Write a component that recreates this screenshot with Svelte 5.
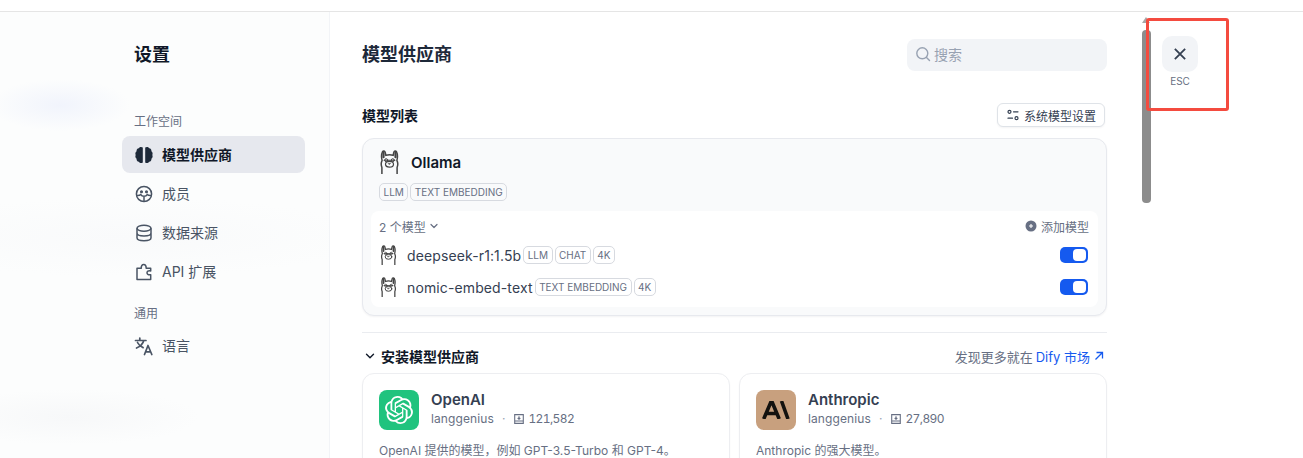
<script>
  const openai = "M22.2819 9.8211a5.9847 5.9847 0 0 0-.5157-4.9108 6.0462 6.0462 0 0 0-6.5098-2.9A6.0651 6.0651 0 0 0 4.9807 4.1818a5.9847 5.9847 0 0 0-3.9977 2.9 6.0462 6.0462 0 0 0 .7427 7.0966 5.98 5.98 0 0 0 .511 4.9107 6.051 6.051 0 0 0 6.5146 2.9001A5.9847 5.9847 0 0 0 13.2599 24a6.0557 6.0557 0 0 0 5.7718-4.2058 5.9894 5.9894 0 0 0 3.9977-2.9001 6.0557 6.0557 0 0 0-.7475-7.0729zm-9.022 12.6081a4.4755 4.4755 0 0 1-2.8764-1.0408l.1419-.0804 4.7783-2.7582a.7948.7948 0 0 0 .3927-.6813v-6.7369l2.02 1.1686a.071.071 0 0 1 .038.052v5.5826a4.504 4.504 0 0 1-4.4945 4.4944zm-9.6607-4.1254a4.4708 4.4708 0 0 1-.5346-3.0137l.142.0852 4.783 2.7582a.7712.7712 0 0 0 .7806 0l5.8428-3.3685v2.3324a.0804.0804 0 0 1-.0332.0615L9.74 19.9502a4.4992 4.4992 0 0 1-6.1408-1.6464zM2.3408 7.8956a4.485 4.485 0 0 1 2.3655-1.9728V11.6a.7664.7664 0 0 0 .3879.6765l5.8144 3.3543-2.0201 1.1685a.0757.0757 0 0 1-.071 0l-4.8303-2.7865A4.504 4.504 0 0 1 2.3408 7.872zm16.5963 3.8558L13.1038 8.364 15.1192 7.2a.0757.0757 0 0 1 .071 0l4.8303 2.7913a4.4944 4.4944 0 0 1-.6765 8.1042v-5.6772a.79.79 0 0 0-.407-.667zm2.0107-3.0231l-.142-.0852-4.7735-2.7818a.7759.7759 0 0 0-.7854 0L9.409 9.2297V6.8974a.0662.0662 0 0 1 .0284-.0615l4.8303-2.7866a4.4992 4.4992 0 0 1 6.6802 4.66zM8.3065 12.863l-2.02-1.1638a.0804.0804 0 0 1-.038-.0567V6.0742a4.4992 4.4992 0 0 1 7.3757-3.4537l-.142.0805L8.704 5.459a.7948.7948 0 0 0-.3927.6813zm1.0976-2.3654l2.602-1.4998 2.6069 1.4998v2.9994l-2.5974 1.4997-2.6067-1.4997Z";
  const models = [
    { name: 'deepseek-r1:1.5b', tags: ['LLM', 'CHAT', '4K'] },
    { name: 'nomic-embed-text', tags: ['TEXT EMBEDDING', '4K'] }
  ];
</script>

{#snippet llama(w, h)}
  <svg class="llama" width={w} height={h} viewBox="0 0 20 24" fill="none" stroke="#444" stroke-width="1.5" stroke-linecap="round" stroke-linejoin="round">
    <path d="M2.4 24v-6.5C1.4 15 1.5 12.6 2.6 10.4 2 8 2 3.800 2.900 2 3.800.6 5.400.8 5.800 2.600L6.300 5.400C8.500 4.500 11.500 4.500 13.700 5.400L14.200 2.600C14.600.8 16.200.6 17.100 2 18 3.800 18 8 17.400 10.400 18.500 12.600 18.600 15 17.600 17.500V24" />
    <path d="M4 2.200v5M16 2.200v5" stroke-width="2.200" />
    <path d="M4.600 10.300h10.800" stroke-width="1.100" />
    <ellipse cx="10" cy="14.200" rx="4" ry="2.900" stroke-width="1.200" />
    <circle cx="6.700" cy="10.200" r="1.500" stroke-width="1" />
    <circle cx="13.300" cy="10.200" r="1.500" stroke-width="1" />
    <path d="M9 13.400h2l-1 1z" fill="#444" stroke-width=".6" />
  </svg>
{/snippet}

{#snippet dl()}
  <svg width="12" height="12" viewBox="0 0 12 12" fill="none" stroke="#676f83" stroke-width="1.100"><path d="M1.700 1.600h8.600v8.800H1.700zM1.700 8h8.600M6 3.200v3M4.700 5 6 6.300 7.300 5" /></svg>
{/snippet}

<div class="page">
  <div class="topbar"></div>
  <div class="body">
    <aside class="sidebar">
      <h1 class="side-title">设置</h1>
      <div class="side-label">工作空间</div>
      <nav class="nav">
        <div class="nav-item active">
          <svg width="20" height="20" viewBox="0 0 20 20" fill="#1d2939"><path d="M8.800 2.600v14.800c-1.200 1.100-3.200.8-4-.7-1.500-.2-2.500-1.500-2.200-3C1.400 12.900 1 11.200 1.700 10 1 8.800 1.400 7.100 2.600 6.300 2.300 4.800 3.300 3.500 4.800 3.300c.8-1.500 2.800-1.800 4-.7zM11.200 2.600v14.800c1.200 1.100 3.200.8 4-.7 1.500-.2 2.500-1.500 2.200-3 1.200-.8 1.600-2.500.9-3.700.7-1.200.3-2.900-.9-3.700.3-1.500-.7-2.800-2.200-3-.8-1.500-2.800-1.800-4-.7z"/></svg>
          <span>模型供应商</span>
        </div>
        <div class="nav-item">
          <svg width="20" height="20" viewBox="0 0 20 20" fill="none" stroke="#495464" stroke-width="1.500" stroke-linecap="round"><circle cx="10" cy="10" r="7.600"/><path d="M2.800 11.500c2 .2 3.200-.1 4-1 .6 1.300 1.800 1.800 3.200 1.800s2.600-.5 3.200-1.800c.8.900 2 1.200 4 1M10 12.300v5"/><circle cx="7.500" cy="7.700" r=".8" fill="#495464"/><circle cx="12.500" cy="7.700" r=".8" fill="#495464"/></svg>
          <span>成员</span>
        </div>
        <div class="nav-item">
          <svg width="20" height="20" viewBox="0 0 20 20" fill="none" stroke="#495464" stroke-width="1.500"><ellipse cx="10" cy="5.300" rx="7" ry="3"/><path d="M3 5.300v9.400c0 1.700 3.100 3 7 3s7-1.300 7-3V5.300M3 10c0 1.700 3.100 3 7 3s7-1.300 7-3"/></svg>
          <span>数据来源</span>
        </div>
        <div class="nav-item">
          <svg width="20" height="20" viewBox="0 0 20 20" fill="none" stroke="#495464" stroke-width="1.500" stroke-linejoin="round"><path d="M3 17.500V6.200h4.300C7 3.800 8.200 2.500 9.700 2.500s2.700 1.300 2.400 3.700h4.600v2.700c-2.700-.5-3.700.6-3.700 1.900s1 2.400 3.700 1.900v4.800z"/></svg>
          <span>API 扩展</span>
        </div>
      </nav>
      <div class="side-label second">通用</div>
      <div class="nav-item">
        <svg width="20" height="20" viewBox="0 0 20 20" fill="none" stroke="#495464" stroke-width="1.700" stroke-linecap="round" stroke-linejoin="round"><path d="M1.500 4.500h10.500M5.800 2v2.500M9.800 4.500C8.800 8.300 6 10.600 2.500 12M3.500 6.500c1.200 2.500 3.200 4.100 5.600 5.100M10.500 18.500l3.500-9 3.800 9M11.700 15.800h5"/></svg>
        <span>语言</span>
      </div>
    </aside>

    <main class="main">
      <header class="head">
        <h2>模型供应商</h2>
        <div class="search">
          <svg width="16" height="16" viewBox="0 0 16 16" fill="none" stroke="#98a2b2" stroke-width="1.400" stroke-linecap="round"><circle cx="7.300" cy="7.300" r="5.500"/><path d="m11.500 11.500 3 3"/></svg>
          <span>搜索</span>
        </div>
      </header>

      <div class="list-head">
        <h3>模型列表</h3>
        <div class="sys-btn">
          <svg width="14" height="14" viewBox="0 0 14 14" fill="none" stroke="#354052" stroke-width="1.200" stroke-linecap="round"><circle cx="3.500" cy="3.800" r="1.500"/><path d="M7.500 3.800h4.500M2 10.200h4.500"/><circle cx="10.500" cy="10.200" r="1.500"/></svg>
          <span>系统模型设置</span>
        </div>
      </div>

      <section class="provider">
        <div class="prov-title">
          {@render llama(21, 24)}
          <span>Ollama</span>
        </div>
        <div class="tags">
          <span class="tag">LLM</span><span class="tag">TEXT EMBEDDING</span>
        </div>
        <div class="inner">
          <div class="inner-head">
            <span class="count">2 个模型
              <svg width="12" height="12" viewBox="0 0 12 12" fill="none" stroke="#676f83" stroke-width="1.200" stroke-linecap="round" stroke-linejoin="round"><path d="m3 4.500 3 3 3-3"/></svg>
            </span>
            <span class="add">
              <svg width="12" height="12" viewBox="0 0 12 12"><circle cx="6" cy="6" r="5.500" fill="#676f83"/><path d="M6 4v4M4 6h4" stroke="#fff" stroke-width="1.100"/></svg>
              添加模型
            </span>
          </div>
          {#each models as m}
            <div class="row">
              {@render llama(17, 20)}
              <span class="model-name">{m.name}</span>
              <span class="row-tags">
                {#each m.tags as t}<span class="tag white">{t}</span>{/each}
              </span>
              <span class="toggle"><i></i></span>
            </div>
          {/each}
        </div>
      </section>

      <hr class="sep" />

      <div class="install-head">
        <h3>
          <svg width="12" height="12" viewBox="0 0 12 12" fill="none" stroke="#101828" stroke-width="1.400" stroke-linecap="round" stroke-linejoin="round"><path d="m2.500 4.200 3.500 3.500 3.500-3.500"/></svg>
          安装模型供应商
        </h3>
        <span class="market">发现更多就在 <b>Dify 市场</b>
          <svg width="12" height="12" viewBox="0 0 12 12" fill="none" stroke="#155aef" stroke-width="1.300"><path d="M2.500 9.500 9.500 2.500M3.500 2.500h6v6"/></svg>
        </span>
      </div>

      <div class="cards">
        <article class="card">
          <div class="card-top">
            <div class="logo green">
              <svg width="28" height="28" viewBox="0 0 24 24" fill="#fff"><path d={openai}/></svg>
            </div>
            <div>
              <div class="card-name">OpenAI</div>
              <div class="card-meta">langgenius <em>·</em> {@render dl()} <span>121,582</span></div>
            </div>
          </div>
          <p>OpenAI 提供的模型，例如 GPT-3.5-Turbo 和 GPT-4。</p>
        </article>
        <article class="card">
          <div class="card-top">
            <div class="logo tan">
              <svg width="28" height="18" viewBox="0 0 28 18" fill="none" stroke="#14120f" stroke-width="3.600"><path d="M1.700 18 8.700 1.500h1.600L17.200 18M5 12.500h9M19.500 0 26 18"/></svg>
            </div>
            <div>
              <div class="card-name">Anthropic</div>
              <div class="card-meta">langgenius <em>·</em> {@render dl()} <span>27,890</span></div>
            </div>
          </div>
          <p>Anthropic 的强大模型。</p>
        </article>
      </div>
    </main>

    <div class="scroll"><div class="thumb"></div></div>

    <div class="close-col">
      <div class="close">
        <svg width="16" height="16" viewBox="0 0 14 14" fill="none" stroke="#354052" stroke-width="1.600"><path d="m2.500 2.500 9 9M11.500 2.500l-9 9"/></svg>
      </div>
      <span class="esc">ESC</span>
    </div>
  </div>
  <div class="annot"></div>
</div>

<style>
  :global(body) { margin: 0; background: #fff; overflow: hidden; }
  .page {
    position: relative;
    width: 1303px;
    height: 458px;
    overflow: hidden;
    font-family: Inter, "Noto Sans CJK SC", sans-serif;
    color: #354052;
    background: #fff;
  }
  .topbar { height: 11px; border-bottom: 1px solid #e5e5e5; box-sizing: content-box; }
  .body { display: flex; height: 446px; }

  .sidebar {
    flex: none;
    width: 183px;
    box-sizing: content-box;
    border-right: 1px solid #f2f4f7;
    padding: 0 24px 0 122px;
    background:
      radial-gradient(ellipse 70px 26px at 60px 93px, #f1f4fc 0%, transparent 100%),
      radial-gradient(ellipse 130px 28px at 70px 405px, #f7f8f9 0%, transparent 100%),
      radial-gradient(ellipse 240px 40px at 130px 225px, #f9fafb 0%, transparent 100%),
      #fcfdfd;
  }
  .side-title { margin: 30px 0 0 12px; font-size: 18px; line-height: 26px; font-weight: 600; color: #101828; }
  .side-label { margin: 45px 0 0 12px; font-size: 12px; line-height: 18px; color: #676f83; height: 23px; }
  .side-label.second { margin-top: 15px; height: 22px; }
  .nav { display: flex; flex-direction: column; gap: 2px; }
  .nav-item {
    display: flex; align-items: center; gap: 8px;
    height: 37px; padding-left: 12px; border-radius: 8px;
    font-size: 14px; color: #495464;
  }
  .nav-item.active { background: #e6e8ee; color: #101828; font-weight: 600; }
  .nav-item span { padding-bottom: 2px; }

  .main { width: 745px; flex: none; padding: 0 35px 0 32px; box-sizing: content-box; overflow: hidden; }
  .head { display: flex; justify-content: space-between; align-items: center; margin-top: 27px; height: 32px; }
  .head h2 { margin: 0; font-size: 18px; font-weight: 600; color: #1d2939; line-height: 32px; }
  .search {
    width: 200px; height: 32px; background: #f2f4f7; border-radius: 8px;
    display: flex; align-items: center; gap: 3px; padding: 0 0 2px 8px; box-sizing: border-box;
    font-size: 14px; color: #98a2b2;
  }
  .list-head { display: flex; justify-content: space-between; align-items: center; margin-top: 32px; height: 24px; padding-right: 2px; }
  h3 { margin: 0; font-size: 14px; font-weight: 600; color: #101828; }
  .sys-btn {
    display: flex; align-items: center; gap: 4px; height: 24px; width: 108px; box-sizing: border-box;
    border: 1px solid #dfe3e8; border-radius: 6px; padding-left: 8px; font-size: 12px; color: #354052;
    background: #fff; box-shadow: 0 1px 2px rgba(16,24,40,.05); white-space: nowrap;
  }
  .provider {
    margin-top: 11px; height: 178px; box-sizing: border-box;
    background: #f9fafb; border: 1px solid #e7e9ee; border-radius: 12px;
    box-shadow: 0 1px 2px rgba(16,24,40,.05);
    padding: 0 8px;
  }
  .prov-title { display: flex; align-items: center; gap: 11px; margin: 11px 0 0 8px; height: 24px; font-size: 15px; font-weight: 600; color: #101828; }
  .tags { display: flex; gap: 2px; margin: 9px 0 0 8px; height: 18px; }
  .tag {
    display: inline-flex; align-items: center; height: 18px; box-sizing: border-box;
    padding: 0 3.5px; border: 1px solid #d7dae0; border-radius: 5px;
    font-size: 10px; color: #676f83; white-space: nowrap; font-weight: 400;
  }
  .tag.white { background: #fff; }
  .inner { background: #fff; border-radius: 8px; margin-top: 10px; height: 96px; padding: 0 8px; box-sizing: border-box; }
  .inner-head { display: flex; justify-content: space-between; align-items: center; height: 28px; padding: 2px 1px 0 0; box-sizing: border-box; font-size: 12px; color: #676f83; }
  .count { display: inline-flex; align-items: center; gap: 2px; }
  .add { display: inline-flex; align-items: center; gap: 4px; }
  .row { display: flex; align-items: center; height: 32px; }
  .row .llama { flex: none; margin: 0 10px 0 1px; }
  .model-name { font-size: 14px; letter-spacing: .12px; color: #354052; white-space: nowrap; margin-right: 2px; }
  .row-tags { display: flex; gap: 2px; }
  .toggle {
    margin-left: auto; margin-right: 2px; width: 28px; height: 16px; border-radius: 5px; background: #155aef;
    display: flex; align-items: center; justify-content: flex-end; padding-right: 2px; box-sizing: border-box;
  }
  .toggle i { display: block; width: 13px; height: 12px; border-radius: 4px; background: #fff; }
  .sep { border: 0; height: 1px; background: #eaecf0; margin: 16px 0 0; }
  .install-head { display: flex; justify-content: space-between; align-items: center; height: 24px; margin-top: 11px; margin-bottom: 5px; padding-right: 2px; }
  .install-head h3 { display: flex; align-items: center; gap: 5px; padding-left: 2px; }
  .market { font-size: 13px; color: #676f83; display: inline-flex; align-items: center; gap: 3px; }
  .market b { font-weight: 400; color: #155aef; }
  .cards { display: grid; grid-template-columns: 1fr 1fr; gap: 9px; margin-top: 4px; }
  .card {
    height: 120px; box-sizing: border-box; border: 1px solid #edeef1; border-radius: 12px; background: #fff;
    padding: 16px;
    box-shadow: 0 1px 2px rgba(16,24,40,.03);
  }
  .card-top { display: flex; gap: 12px; height: 40px; }
  .logo { width: 40px; height: 40px; border-radius: 8px; display: flex; align-items: center; justify-content: center; flex: none; }
  .green { background: #20c37e; }
  .tan { background: #c8a07e; }
  .card-name { font-size: 15px; font-weight: 600; line-height: 20px; color: #354052; }
  .card-meta { display: flex; align-items: center; gap: 3px; font-size: 12px; letter-spacing: .1px; color: #676f83; line-height: 16px; margin-top: 1px; }
  .card-meta span { font-variant-numeric: tabular-nums; letter-spacing: -.6px; }
  .card-meta em { font-style: normal; color: #98a2b2; margin: 0 5px; }
  .card p { margin: 12px 0 0; font-size: 12px; line-height: 18px; color: #676f83; white-space: nowrap; }

  .scroll { width: 9px; flex: none; position: relative; }
  .thumb { position: absolute; left: 0; right: 0; top: 18px; height: 173px; background: #8c8c8c; border-radius: 4px; }
  .scroll::before {
    content: ""; position: absolute; top: 5px; left: 0;
    border-left: 4.5px solid transparent; border-right: 4.5px solid transparent; border-bottom: 6px solid #a8a8a8;
  }
  .close-col { display: flex; flex-direction: column; align-items: center; width: 36px; margin-left: 11px; padding-top: 24px; }
  .close { width: 36px; height: 36px; border-radius: 10px; background: #f2f4f7; display: flex; align-items: center; justify-content: center; flex: none; }
  .esc { font-size: 10px; color: #676f83; margin-top: 1px; line-height: 16px; }
  .annot {
    position: absolute; left: 1146px; top: 18px; width: 83px; height: 93px; box-sizing: border-box;
    border: 3px solid #f44b3f; border-radius: 3px; pointer-events: none;
  }
</style>
